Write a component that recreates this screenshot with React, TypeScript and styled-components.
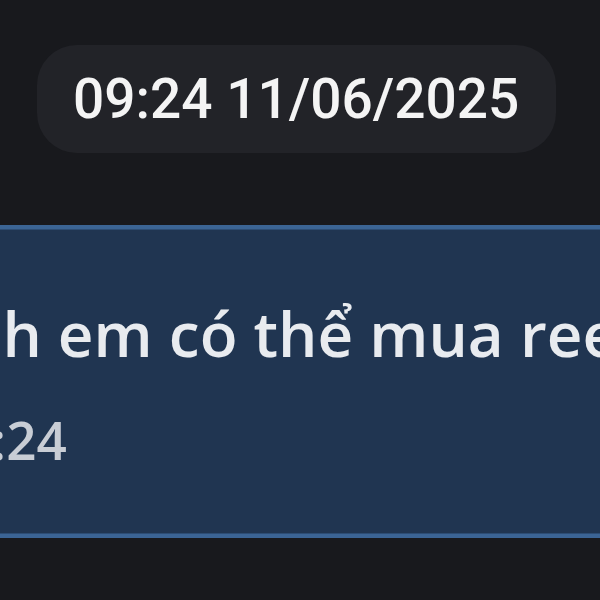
import styled, { createGlobalStyle } from 'styled-components';

const GlobalStyle = createGlobalStyle`
  html, body {
    margin: 0;
    padding: 0;
    background: #18191d;
  }
  body {
    width: 600px;
    height: 600px;
    overflow: hidden;
  }
`;

function App() {
  return (
    <>
      <GlobalStyle />
      <ChatWindow>
        <DateRow>
          <DatePill>09:24 11/06/2025</DatePill>
        </DateRow>
        <MessageBubble>
          <MessageText>Anh em có thể mua reels ở đâu ạ?</MessageText>
          <MessageTime>09:24</MessageTime>
        </MessageBubble>
      </ChatWindow>
    </>
  );
}

const ChatWindow = styled.div`
  display: flex;
  flex-direction: column;
  width: 600px;
  height: 600px;
  overflow: hidden;
  background: #18191d;
  padding-top: 45px;
  box-sizing: border-box;
`;

const DateRow = styled.div`
  display: flex;
  padding-left: 37px;
`;

const DatePill = styled.div`
  display: flex;
  align-items: center;
  height: 108px;
  padding: 0 37px 0 36px;
  border-radius: 40px;
  background: #222328;
  color: #f4f4f4;
  font-family: Roboto, 'Liberation Sans', sans-serif;
  font-size: 55px;
  font-weight: 500;
  white-space: nowrap;
`;

const MessageBubble = styled.div`
  display: flex;
  flex-direction: column;
  margin-top: 72px;
  margin-left: -78px;
  width: 900px;
  padding: 64px 0 59px 0;
  background: #203551;
  border-top: 4px solid #3b6494;
  border-bottom: 4px solid #3b6494;
  box-shadow: inset 0 1px 0 #2d4d74, inset 0 -1px 0 #2d4d74;
  font-family: 'Open Sans', 'Noto Sans', sans-serif;
  font-weight: 600;
  white-space: nowrap;
`;

const MessageText = styled.div`
  font-size: 62px;
  line-height: 80px;
  color: #e8ebef;
`;

const MessageTime = styled.div`
  margin-top: 32px;
  margin-left: 9px;
  font-size: 53px;
  line-height: 70px;
  color: #c8cdd5;
`;

export default App;
